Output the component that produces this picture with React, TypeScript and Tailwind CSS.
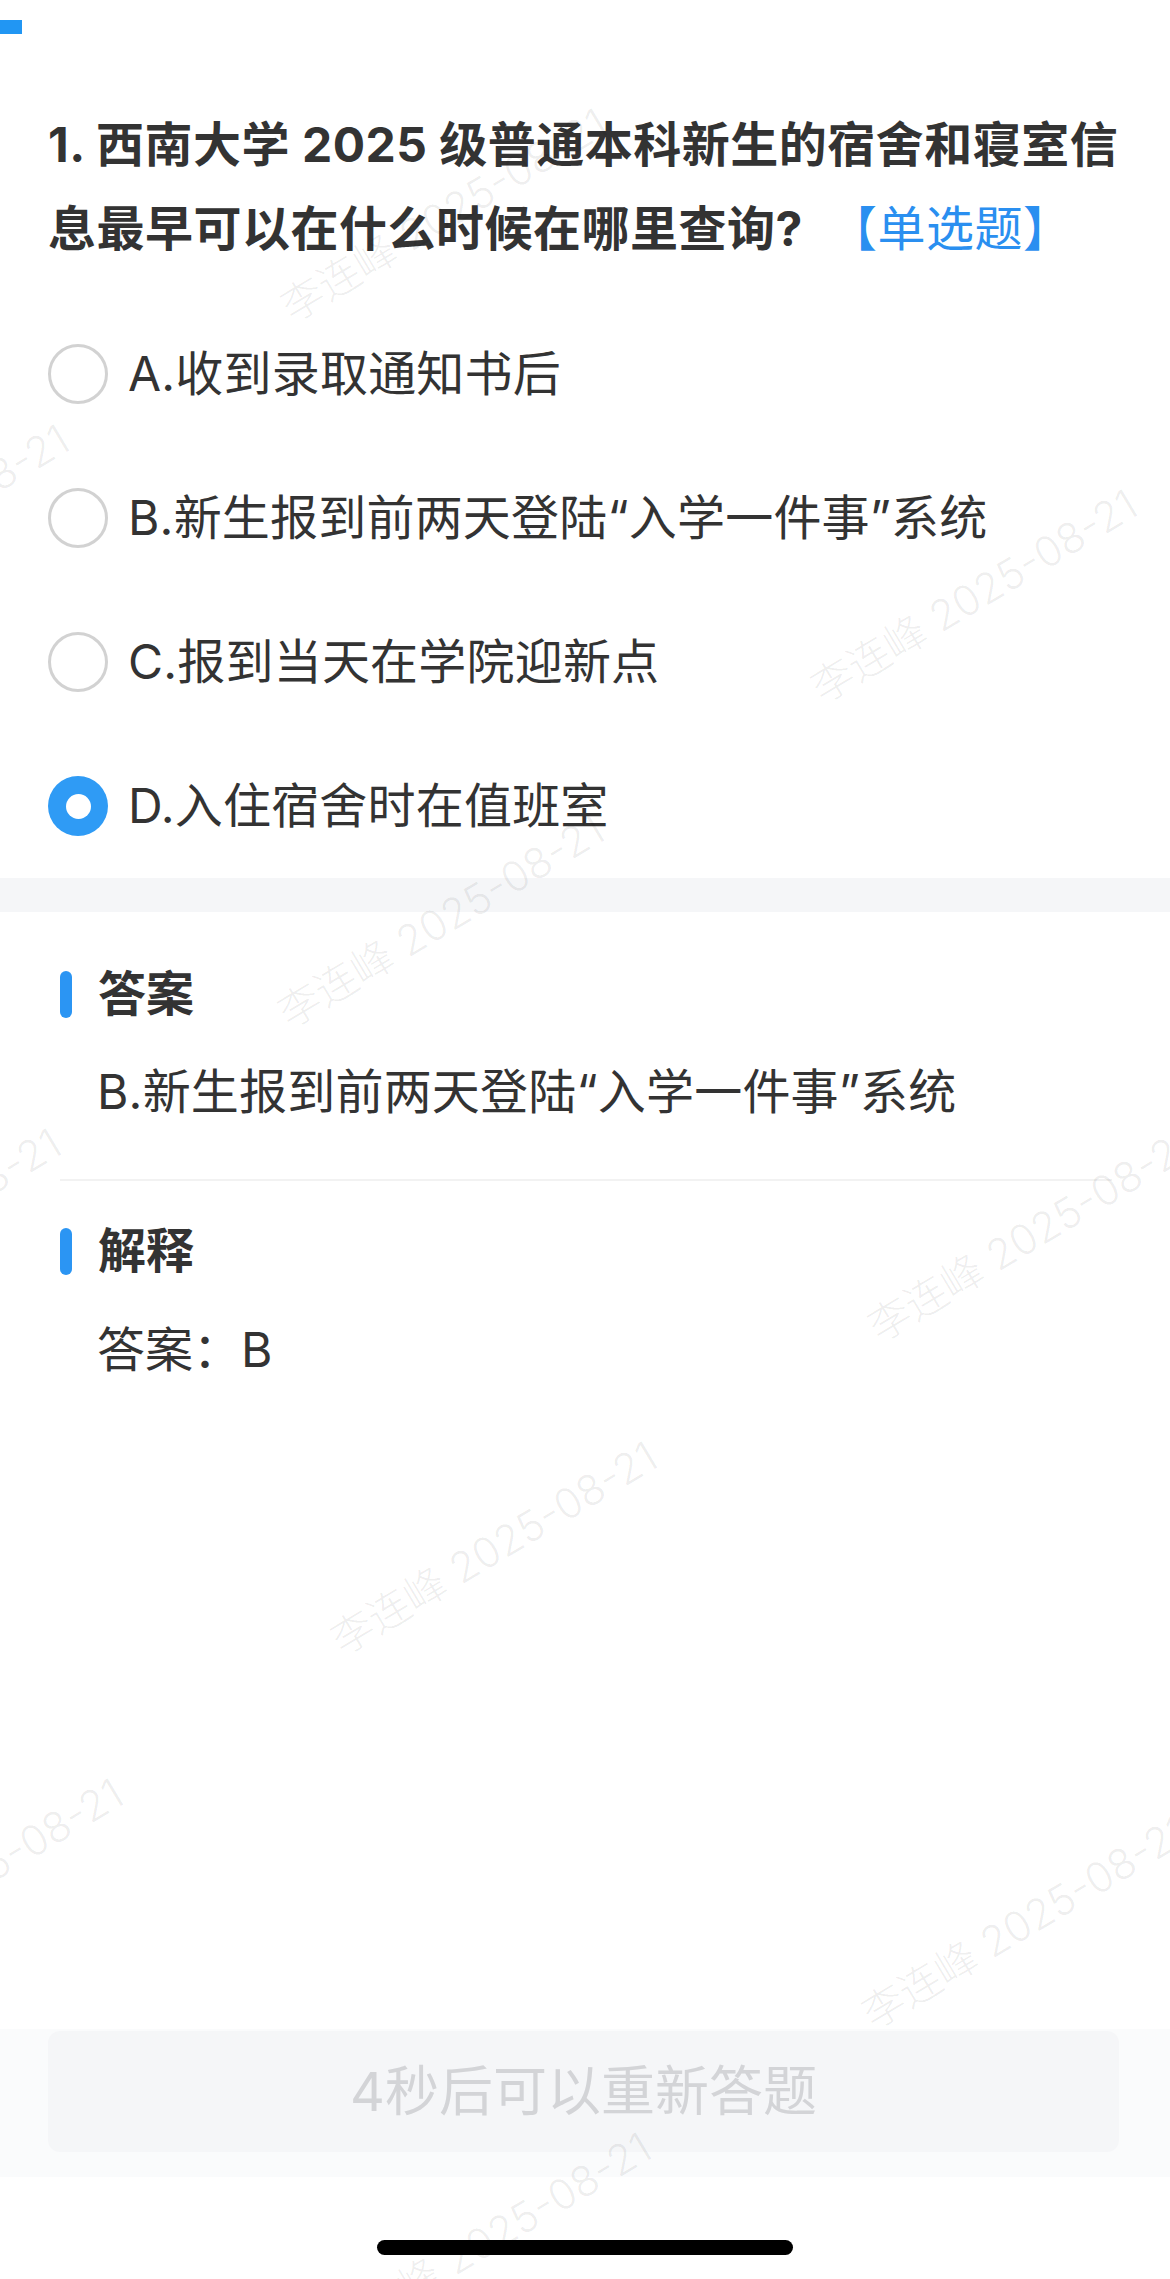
const options = [
    { key: "A", text: "A.收到录取通知书后" },
    { key: "B", text: "B.新生报到前两天登陆“入学一件事”系统" },
    { key: "C", text: "C.报到当天在学院迎新点" },
    { key: "D", text: "D.入住宿舍时在值班室" },
];

const selected = "D";

// watermark tiles, centred on their point
const watermarks = [
    "left-[444px] top-[215px]",
    "left-[974px] top-[596px]",
    "left-[-94px] top-[531px]",
    "left-[441px] top-[921px]",
    "left-[1031px] top-[1235px]",
    "left-[-102px] top-[1235px]",
    "left-[494px] top-[1548px]",
    "left-[1025px] top-[1922px]",
    "left-[-40px] top-[1885px]",
    "left-[488px] top-[2239px]",
];

function Radio({ checked }: { checked: boolean }) {
    if (checked) {
        return (
            <div className="flex h-[60px] w-[60px] shrink-0 items-center justify-center rounded-full bg-[#2f9bf5]">
                <div className="h-[25px] w-[25px] rounded-full bg-white" />
            </div>
        );
    }

    return <div className="h-[60px] w-[60px] shrink-0 rounded-full border-[3px] border-[#d2d2d2]" />;
}

function SectionTitle({ children }: { children: string }) {
    return (
        <div className="flex items-center gap-[26px]">
            <div className="h-[47px] w-[12px] rounded-full bg-[#2b95f3]" />
            <span className="text-[48px] font-bold leading-[60px] text-[#333333]">{children}</span>
        </div>
    );
}

export default function App() {
    return (
        <div className="relative flex h-[2279px] w-[1170px] flex-col overflow-hidden bg-white font-['Inter','Noto_Sans_CJK_SC',sans-serif]">
            <div className="mt-[20px] h-[14px] w-[22px] bg-[#2196f3]" />

            <h1 className="mt-[69px] whitespace-nowrap px-[48px] text-[48px] font-bold leading-[84px] tracking-[0.5px] text-[#333333]">
                1. 西南大学 2025 级普通本科新生的宿舍和寝室信
                <br />
                息最早可以在什么时候在哪里查询?
                <span className="ml-[26px] font-normal text-[#2a8ff0]">【单选题】</span>
            </h1>

            <div className="mt-[31px]">
                {options.map((option) => (
                    <div key={option.key} className="flex h-[144px] items-center gap-[20px] px-[48px]">
                        <Radio checked={option.key === selected} />
                        <span className="text-[48px] leading-[60px] tracking-[0.2px] text-[#333333]">{option.text}</span>
                    </div>
                ))}
            </div>

            <div className="h-[34px] bg-[#f5f6f8]" />

            <div className="pl-[60px] pr-[58px] pt-[52px]">
                <SectionTitle>答案</SectionTitle>
                <p className="mt-[38px] pl-[37px] text-[48px] leading-[60px] tracking-[0.2px] text-[#333333]">
                    B.新生报到前两天登陆“入学一件事”系统
                </p>

                <div className="mt-[57px] h-[2px] bg-[#f2f2f2]" />

                <div className="mt-[40px]">
                    <SectionTitle>解释</SectionTitle>
                </div>
                <p className="mt-[39px] pl-[37px] text-[48px] leading-[60px] text-[#333333]">答案：B</p>
            </div>

            <div className="mt-auto h-[148px] bg-[#fafbfc] pt-[2px]">
                <div className="ml-[48px] mr-[51px] flex h-[121px] items-center justify-center rounded-[12px] bg-[#f5f6f8]">
                    <span className="text-[54px] leading-none text-[#d3d4d7]">4秒后可以重新答题</span>
                </div>
            </div>

            <div className="mx-auto mb-[24px] mt-[63px] h-[15px] w-[416px] rounded-full bg-black" />

            {watermarks.map((pos) => (
                <div
                    key={pos}
                    className={`pointer-events-none absolute ${pos} -translate-x-1/2 -translate-y-1/2 -rotate-[31deg] whitespace-nowrap text-[42px] font-light leading-none text-black/[0.07]`}
                >
                    李连峰 2025-08-21
                </div>
            ))}
        </div>
    );
}
